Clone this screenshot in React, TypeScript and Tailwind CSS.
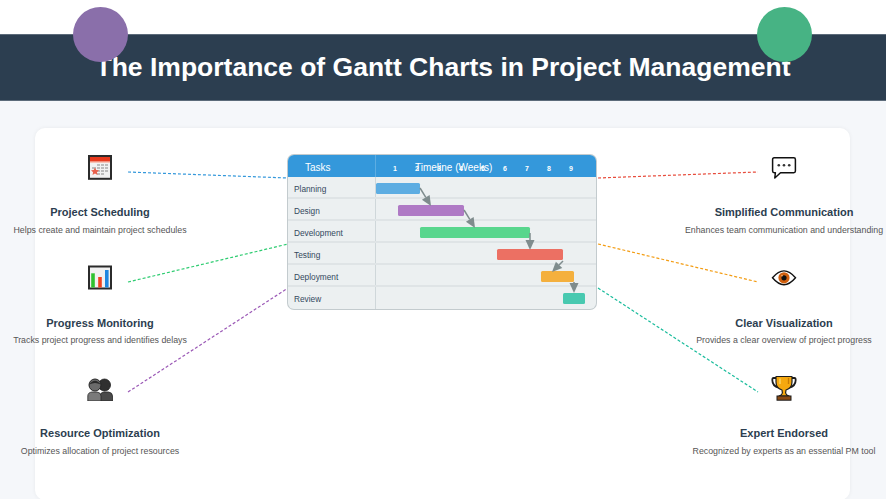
import React from 'react';

interface Feature {
  title: string;
  desc: string;
  icon: React.ReactNode;
}

const CalendarIcon = () => (
  <svg viewBox="0 0 26 26" className="w-[26px] h-[26px]">
    <rect x="2" y="2" width="22" height="22.8" fill="#f2f2f2" stroke="#2b2b2b" strokeWidth="2" />
    <rect x="3" y="3" width="20" height="4.6" fill="#e8391d" />
    <rect x="3" y="7.6" width="20" height="1" fill="#f9a48f" />
    <g fill="#bdbdbd">
      <rect x="10" y="10" width="3" height="2" />
      <rect x="14" y="10" width="3" height="2" />
      <rect x="18" y="10" width="3" height="2" />
      <rect x="5" y="13" width="4" height="2" />
      <rect x="10" y="13" width="3" height="2" />
      <rect x="14" y="13" width="3" height="2" />
      <rect x="18" y="13" width="3" height="2" />
      <rect x="10" y="16" width="3" height="2" />
      <rect x="14" y="16" width="3" height="2" />
      <rect x="18" y="16" width="3" height="2" />
      <rect x="10" y="19" width="3" height="2" />
      <rect x="14" y="19" width="3" height="2" />
    </g>
    <path d="M8 13.5 L9.2 16 L12 16.3 L9.9 18.2 L10.5 21 L8 19.5 L5.5 21 L6.1 18.2 L4 16.3 L6.8 16 Z" fill="#e8604c" />
  </svg>
);

const ChartIcon = () => (
  <svg viewBox="0 0 26 26" className="w-[26px] h-[26px]">
    <rect x="2" y="1.5" width="22" height="22" fill="#f1f1f1" stroke="#2b2b2b" strokeWidth="2" />
    <rect x="4.2" y="8.3" width="3.6" height="14.2" fill="#2fc22f" />
    <rect x="11.2" y="12" width="3.6" height="10.5" fill="#f0431f" />
    <rect x="18" y="5" width="3.6" height="17.5" fill="#1f87e0" />
  </svg>
);

const UsersIcon = () => (
  <svg viewBox="0 0 26 26" className="w-[26px] h-[26px]">
    <path d="M13 26 V21 Q13 17.5 17 17 H21.5 Q25.5 17.5 25.5 21 V26 Z" fill="#4a4a4a" stroke="#262626" strokeWidth="0.8" />
    <circle cx="17.5" cy="10" r="6" fill="#303030" stroke="#1c1c1c" strokeWidth="0.8" />
    <path d="M0.8 26 V21 Q0.8 17.5 5 17 H10 Q14 17.5 14 21 V26 Z" fill="#7a7a7a" stroke="#2a2a2a" strokeWidth="0.8" />
    <circle cx="8" cy="10" r="6" fill="#6b6b6b" stroke="#262626" strokeWidth="1" />
    <path d="M2.2 9.5 Q8 2 13.8 9.5 Q8 6.5 2.2 9.5 Z" fill="#2b2b2b" />
  </svg>
);

const SpeechIcon = () => (
  <svg viewBox="0 0 26 26" className="w-[26px] h-[26px]">
    <path d="M3.2 3.8 H22.8 Q24.4 3.8 24.4 5.5 V17 Q24.4 18.7 22.8 18.7 H9.5 L3.8 24 L4.4 18.7 H3.2 Q1.6 18.7 1.6 17 V5.5 Q1.6 3.8 3.2 3.8 Z" fill="#fff" stroke="#111" strokeWidth="1.5" strokeLinejoin="round" />
    <circle cx="7.8" cy="11.3" r="1.3" fill="#333" />
    <circle cx="13" cy="11.3" r="1.3" fill="#333" />
    <circle cx="18.2" cy="11.3" r="1.3" fill="#333" />
  </svg>
);

const EyeIcon = () => (
  <svg viewBox="0 0 26 26" className="w-[26px] h-[26px]">
    <path d="M1.5 12.8 Q13 -1 24.5 12.8 Q13 26.6 1.5 12.8 Z" fill="#fff" stroke="#111" strokeWidth="1.4" />
    <circle cx="13" cy="12.8" r="5.6" fill="#d1600f" />
    <circle cx="13" cy="12.8" r="2.6" fill="#111" />
    <circle cx="11" cy="10.6" r="0.9" fill="#f3a766" />
  </svg>
);

const TrophyIcon = () => (
  <svg viewBox="0 0 26 26" className="w-[26px] h-[26px]">
    <path d="M6 3 H2.5 Q1.3 3 1.3 5 Q1.3 11 8 13 M20 3 H23.5 Q24.7 3 24.7 5 Q24.7 11 18 13" fill="none" stroke="#1d1d1d" strokeWidth="1.8" />
    <path d="M5 1.5 H21 V7 Q21 13 15 15 L14.6 18 Q15 20 18 21 H8 Q11 20 11.4 18 L11 15 Q5 13 5 7 Z" fill="#f5a80f" stroke="#1d1d1d" strokeWidth="1.2" strokeLinejoin="round" />
    <path d="M9 3.5 V9" stroke="#fbd15e" strokeWidth="1.6" />
    <path d="M17.5 3 V9" stroke="#c97c05" strokeWidth="1.3" />
    <rect x="6" y="21" width="14" height="4.2" fill="#8a4a12" stroke="#1d1d1d" strokeWidth="1" />
  </svg>
);

const leftFeatures: Feature[] = [
  { title: 'Project Scheduling', desc: 'Helps create and maintain project schedules', icon: <CalendarIcon /> },
  { title: 'Progress Monitoring', desc: 'Tracks project progress and identifies delays', icon: <ChartIcon /> },
  { title: 'Resource Optimization', desc: 'Optimizes allocation of project resources', icon: <UsersIcon /> },
];

const rightFeatures: Feature[] = [
  { title: 'Simplified Communication', desc: 'Enhances team communication and understanding', icon: <SpeechIcon /> },
  { title: 'Clear Visualization', desc: 'Provides a clear overview of project progress', icon: <EyeIcon /> },
  { title: 'Expert Endorsed', desc: 'Recognized by experts as an essential PM tool', icon: <TrophyIcon /> },
];

const tasks = [
  { name: 'Planning', start: 0, width: 44, color: 'bg-[#5dade2]' },
  { name: 'Design', start: 22, width: 66, color: 'bg-[#af7ac5]' },
  { name: 'Development', start: 44, width: 110, color: 'bg-[#58d68d]' },
  { name: 'Testing', start: 121, width: 66, color: 'bg-[#ec7063]' },
  { name: 'Deployment', start: 165, width: 33, color: 'bg-[#f4b03e]' },
  { name: 'Review', start: 187, width: 22, color: 'bg-[#48c9b0]' },
];

const weeks = [1, 2, 3, 4, 5, 6, 7, 8, 9];

// page coordinates of the dashed links between the chart and the features
const links = [
  { x1: 128, y1: 172, x2: 288, y2: 178, color: '#3498db' },
  { x1: 128, y1: 282, x2: 288, y2: 244, color: '#2ecc71' },
  { x1: 128, y1: 392, x2: 288, y2: 288, color: '#9b59b6' },
  { x1: 598, y1: 178, x2: 758, y2: 172, color: '#e74c3c' },
  { x1: 598, y1: 244, x2: 758, y2: 282, color: '#f39c12' },
  { x1: 598, y1: 288, x2: 758, y2: 392, color: '#1abc9c' },
];

// chart coordinates (origin at chart top left)
const arrows = [
  { x1: 132, y1: 33, x2: 143, y2: 51 },
  { x1: 176, y1: 55, x2: 187, y2: 73 },
  { x1: 242, y1: 78, x2: 242, y2: 95 },
  { x1: 275, y1: 106, x2: 264, y2: 117 },
  { x1: 286, y1: 127, x2: 286, y2: 138 },
];

const FeatureColumn: React.FC<{ items: Feature[] }> = ({ items }) => (
  <div className="w-[130px] flex flex-col">
    {items.map((f) => (
      <div key={f.title} className="h-[110.5px] flex flex-col items-center">
        <div className="h-[26px] shrink-0">{f.icon}</div>
        <div className="mt-[25px] text-[11px] leading-[14px] font-bold text-[#2c3e50] whitespace-nowrap">{f.title}</div>
        <div className="mt-[4.6px] text-[8.8px] leading-[12px] text-[#555555] whitespace-nowrap">{f.desc}</div>
      </div>
    ))}
  </div>
);

const GanttChart = () => (
  <div className="relative w-[308px] h-[154px] mt-[1px] rounded-[6px] bg-[#ecf0f1] shadow-[0_0_0_1px_#c3cbce] shrink-0">
    <div className="relative flex h-[22px] rounded-t-[6px] bg-[#3498db] text-white">
      <div className="w-[88px] pl-[17px] text-[10px] leading-[26px] border-r border-[#5dade2]">Tasks</div>
      <div className="flex-1 flex pl-[17px] text-[7px] font-bold leading-[27px]">
        {weeks.map((w) => (
          <span key={w} className="w-[22px]">{w}</span>
        ))}
      </div>
      <div className="absolute left-[127px] top-0 text-[10px] leading-[26px] whitespace-nowrap">Timeline (Weeks)</div>
    </div>
    {tasks.map((t, i) => (
      <div key={t.name} className={`flex h-[22px] ${i < tasks.length - 1 ? 'border-b-2 border-[#dfe4e6]' : ''}`}>
        <div className="w-[88px] pl-[6px] text-[8.3px] leading-[24px] text-[#34495e] border-r border-[#cfd7da]">{t.name}</div>
        <div className="flex-1 pt-[6px]">
          <div className={`h-[11px] rounded-[1.5px] ${t.color}`} style={{ marginLeft: t.start, width: t.width }} />
        </div>
      </div>
    ))}
    <svg className="absolute left-0 top-0" width="309" height="155" viewBox="0 0 309 155">
      {arrows.map((a, i) => {
        const len = Math.hypot(a.x2 - a.x1, a.y2 - a.y1);
        const ux = (a.x2 - a.x1) / len;
        const uy = (a.y2 - a.y1) / len;
        const bx = a.x2 - ux * 10;
        const by = a.y2 - uy * 10;
        const head = `${a.x2},${a.y2} ${bx - uy * 4.5},${by + ux * 4.5} ${bx + uy * 4.5},${by - ux * 4.5}`;
        return (
          <g key={i}>
            <line x1={a.x1} y1={a.y1} x2={bx} y2={by} stroke="#7f8c8d" strokeWidth="1.5" />
            <polygon points={head} fill="#7f8c8d" />
          </g>
        );
      })}
    </svg>
  </div>
);

export default function App() {
  return (
    <div className="relative w-[886px] h-[499px] overflow-hidden flex flex-col bg-[#f5f7fa] font-['Liberation_Sans',Arial,sans-serif]">
      <div className="h-[34px] bg-white shrink-0" />
      <header className="h-[67px] shrink-0 flex items-center justify-center bg-[#2c3e50] border-y border-[#5c6b7a]">
        <h1 className="text-[26.5px] font-bold text-white whitespace-nowrap">The Importance of Gantt Charts in Project Management</h1>
      </header>
      <div className="absolute left-[72.5px] top-[6.5px] w-[55.5px] h-[55.5px] rounded-full bg-[#8a6faa]" />
      <div className="absolute left-[756.5px] top-[6.5px] w-[55.5px] h-[55.5px] rounded-full bg-[#47b384]" />

      <main className="pt-[27px] pl-[35px]">
        <div className="relative w-[815px] h-[372px] rounded-[10px] bg-white shadow-[0_0_4px_rgba(0,0,0,0.06)] pt-[26px] pr-[1px] flex justify-between">
          <svg className="absolute left-0 top-0" width="815" height="372" viewBox="35 128 815 372">
            {links.map((l) => (
              <line key={l.color} x1={l.x1} y1={l.y1} x2={l.x2} y2={l.y2} stroke={l.color} strokeWidth="1.2" strokeDasharray="3 2" />
            ))}
          </svg>
          <FeatureColumn items={leftFeatures} />
          <GanttChart />
          <FeatureColumn items={rightFeatures} />
        </div>
      </main>
    </div>
  );
}
